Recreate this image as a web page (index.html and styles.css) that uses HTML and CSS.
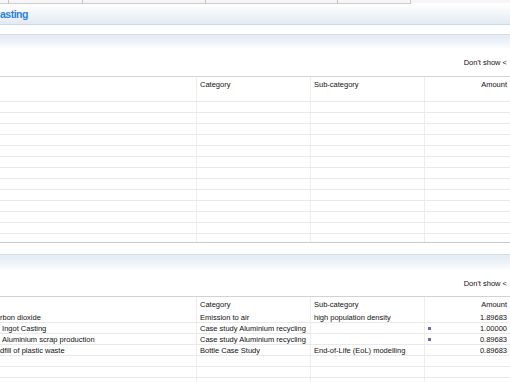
FILE: index.html
```html
<!DOCTYPE html>
<html lang="en">
<head>
    <meta charset="UTF-8">
    <title>Contribution tree</title>
    <link rel="stylesheet" href="styles.css">
</head>
<body>
    <!-- Остаток полосы вкладок -->
    <div class="tab-strip">
        <span class="tab tab-a"></span>
        <span class="tab tab-b"></span>
        <span class="tab tab-c"></span>
        <span class="tab tab-d"></span>
        <span class="tab tab-e"></span>
    </div>

    <div class="title-bar">asting</div>

    <!-- Первая секция -->
    <div class="section-bar"></div>
    <div class="dont-show first">Don't show &lt;</div>
    <div class="table table-one">
        <div class="row head tall">
            <div class="cell"></div>
            <div class="cell">Category</div>
            <div class="cell">Sub-category</div>
            <div class="cell num">Amount</div>
        </div>
        <div class="rows" id="emptyRows"></div>
    </div>

    <!-- Вторая секция -->
    <div class="section-bar second"></div>
    <div class="dont-show">Don't show &lt;</div>
    <div class="table table-two">
        <div class="row head">
            <div class="cell"></div>
            <div class="cell">Category</div>
            <div class="cell">Sub-category</div>
            <div class="cell num">Amount</div>
        </div>
        <div class="rows">
            <div class="row">
                <div class="cell">rbon dioxide</div>
                <div class="cell">Emission to air</div>
                <div class="cell">high population density</div>
                <div class="cell num">1.89683</div>
            </div>
            <div class="row">
                <div class="cell">&nbsp;Ingot Casting</div>
                <div class="cell">Case study Aluminium recycling</div>
                <div class="cell"></div>
                <div class="cell num"><span class="bar"></span>1.00000</div>
            </div>
            <div class="row">
                <div class="cell">&nbsp;Aluminium scrap production</div>
                <div class="cell">Case study Aluminium recycling</div>
                <div class="cell"></div>
                <div class="cell num"><span class="bar"></span>0.89683</div>
            </div>
            <div class="row">
                <div class="cell">dfill of plastic waste</div>
                <div class="cell">Bottle Case Study</div>
                <div class="cell">End-of-Life (EoL) modelling</div>
                <div class="cell num">0.89683</div>
            </div>
            <div class="row empty"><div class="cell"></div><div class="cell"></div><div class="cell"></div><div class="cell"></div></div>
            <div class="row empty"><div class="cell"></div><div class="cell"></div><div class="cell"></div><div class="cell"></div></div>
            <div class="row empty"><div class="cell"></div><div class="cell"></div><div class="cell"></div><div class="cell"></div></div>
        </div>
    </div>

    <script>
        // Пустые строки первой таблицы
        const emptyRows = document.getElementById('emptyRows');
        for (let i = 0; i < 14; i++) {
            const row = document.createElement('div');
            row.className = 'row empty';
            row.innerHTML = '<div class="cell"></div><div class="cell"></div><div class="cell"></div><div class="cell"></div>';
            emptyRows.appendChild(row);
        }
    </script>
</body>
</html>
```

FILE: styles.css
```css
body {
    margin: 0;
    background: #fff;
    font-family: "Liberation Sans", Arial, sans-serif;
    font-size: 7.5px;
    color: #111;
    overflow: hidden;
}

/* Полоса вкладок сверху */
.tab-strip {
    display: flex;
    height: 3px;
    background: #f6f6f6;
}

.tab {
    border-bottom: 1px solid #cfcfcf;
    border-right: 1px solid #c4c4c4;
    box-sizing: border-box;
    height: 4px;
}

.tab-a { width: 9px; }
.tab-b { width: 74px; }
.tab-c { width: 123px; }
.tab-d { width: 132px; }
.tab-e { width: 73px; }

/* Заголовок формы */
.title-bar {
    height: 20px;
    margin-top: 1px;
    line-height: 21px;
    background: linear-gradient(to bottom, #ffffff 0%, #f3f6fa 45%, #e2eaf3 100%);
    border-bottom: 1px solid #cad8e7;
    color: #2a82dc;
    font-weight: bold;
    font-size: 10.5px;
    letter-spacing: -0.5px;
}

/* Заголовок секции */
.section-bar {
    height: 14px;
    margin-top: 9px;
    border-top: 1px solid #d5e0ec;
    background: linear-gradient(to bottom, #e4ebf4 0%, #eef3f8 50%, #ffffff 100%);
}

.section-bar.second {
    margin-top: 11px;
    height: 16px;
}

.dont-show {
    text-align: right;
    padding-right: 3px;
    height: 25px;
    line-height: 25px;
}

.dont-show.first {
    height: 27px;
    line-height: 27px;
}

/* Таблицы */
.table {
    border-top: 1px solid #d2d2d2;
    overflow: hidden;
}

.table-one {
    height: 165px;
    border-bottom: 1px solid #c9c9c9;
}

.table-two {
    height: 90px;
}

.row {
    display: grid;
    grid-template-columns: 196px 114px 114px 1fr;
    height: 10px;
    border-bottom: 1px solid #e9e9e9;
}

.row.head {
    height: 15px;
    border-bottom: none;
}

.row.head.tall {
    height: 14px;
}

.cell {
    padding-left: 3px;
    line-height: 11px;
    white-space: nowrap;
    overflow: hidden;
    border-left: 1px solid #ededed;
}

.row.head .cell {
    line-height: 15px;
}

.cell:first-child {
    border-left: none;
    padding-left: 0;
}

.cell.num {
    text-align: right;
    padding-right: 3px;
    position: relative;
}

/* Маленький индикатор вклада */
.bar {
    position: absolute;
    left: 3px;
    top: 4px;
    width: 3px;
    height: 3px;
    background: #6a6d9e;
}
```
